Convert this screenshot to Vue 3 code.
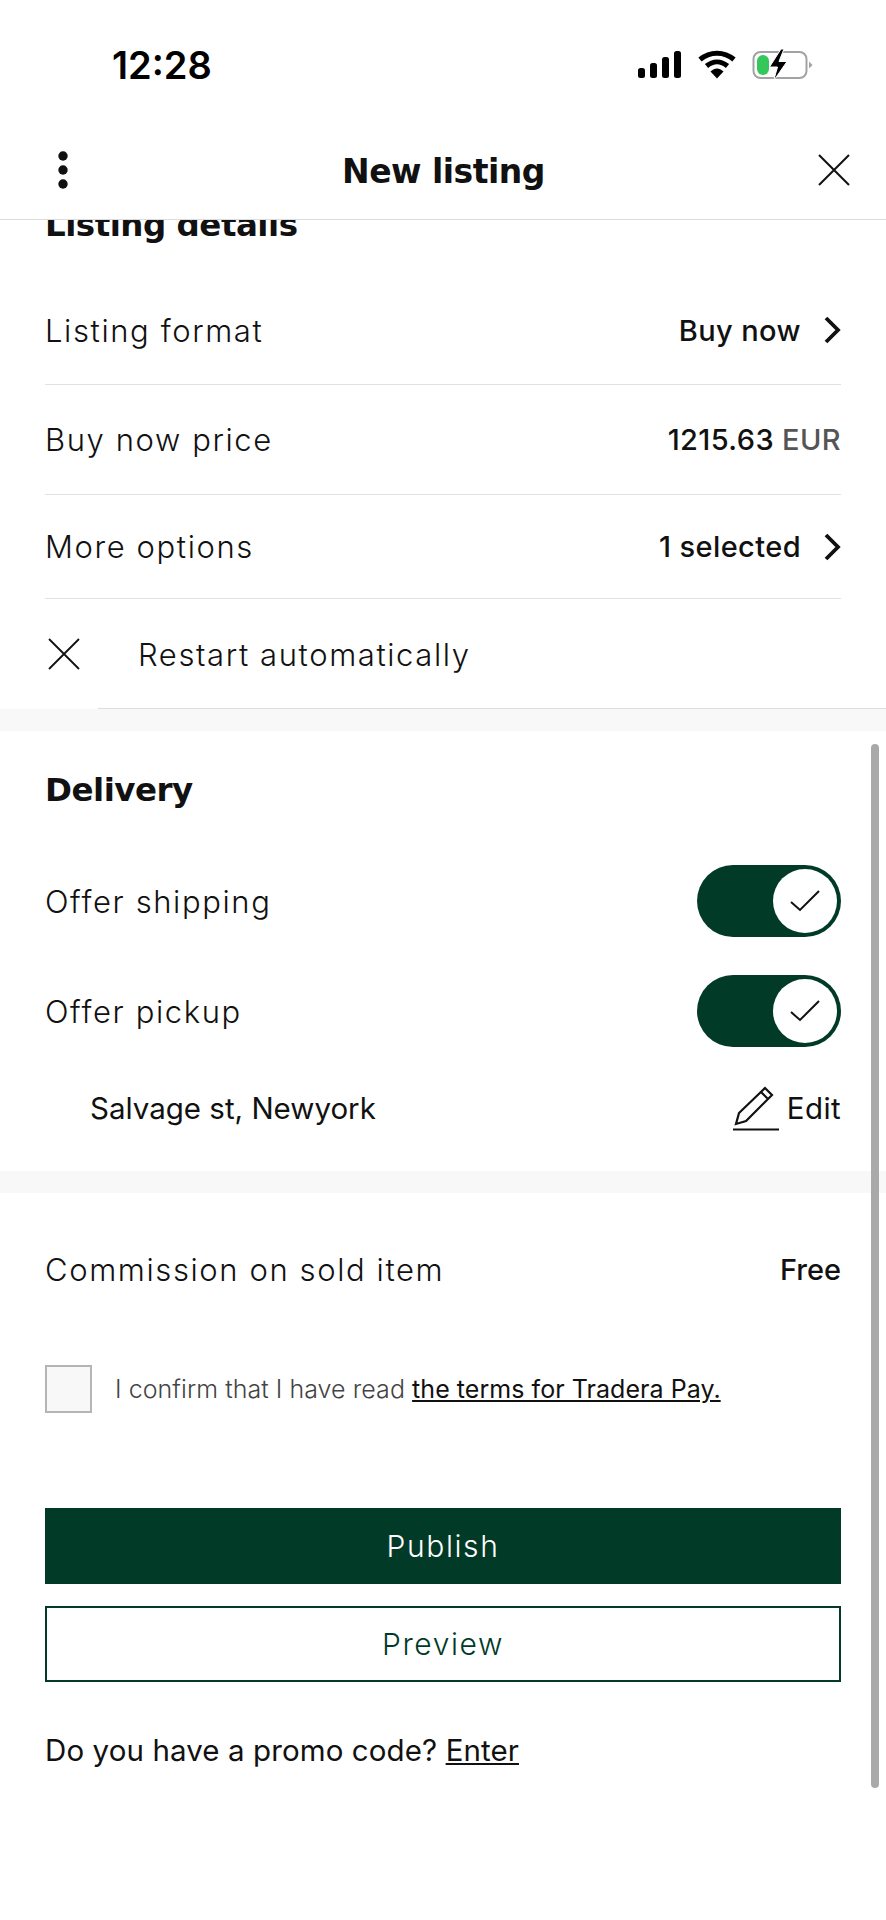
<template>
  <div class="screen">
    <div class="status">
      <span class="time">12:28</span>
      <div class="status-icons">
        <svg width="44" height="28" viewBox="0 0 44 28">
          <rect x="0" y="17" width="7" height="10" rx="2.5" fill="#000" />
          <rect x="12" y="12" width="7" height="15" rx="2.5" fill="#000" />
          <rect x="24" y="6" width="7" height="21" rx="2.5" fill="#000" />
          <rect x="36" y="0" width="7" height="27" rx="2.5" fill="#000" />
        </svg>
        <svg width="38" height="30" viewBox="0 0 38 30">
          <path d="M2 9.5C12 1 26 1 36 9.5" fill="none" stroke="#000" stroke-width="5" />
          <path d="M8.5 16C15 10.5 23 10.5 29.5 16" fill="none" stroke="#000" stroke-width="5" />
          <path d="M12.5 21.5C17 17.5 21 17.5 25.5 21.5L19 28.5Z" fill="#000" />
        </svg>
        <svg class="battery" width="62" height="34" viewBox="0 0 62 34">
          <rect x="1.5" y="4" width="53" height="26" rx="7" fill="none" stroke="#a3a3a3" stroke-width="2" />
          <path d="M57 13.5L60.5 17L57 20.5Z" fill="#a3a3a3" />
          <rect x="5" y="7" width="12" height="20" rx="6" fill="#34c759" />
          <path d="M29 1L17.5 19H25.5L21.5 33L35 13.5H27L32 1Z" fill="#000" stroke="#fff" stroke-width="1" />
        </svg>
      </div>
    </div>

    <header class="topbar">
      <svg class="dots" width="12" height="38" viewBox="0 0 12 38">
        <circle cx="6" cy="5" r="4.7" fill="#111" />
        <circle cx="6" cy="19" r="4.7" fill="#111" />
        <circle cx="6" cy="33" r="4.7" fill="#111" />
      </svg>
      <h1 class="title">New listing</h1>
      <svg class="close" width="32" height="32" viewBox="0 0 32 32">
        <path d="M1 1L31 31M31 1L1 31" stroke="#111" stroke-width="2" fill="none" />
      </svg>
    </header>

    <main class="content">
      <section class="details">
        <h2 class="section-title clipped">Listing details</h2>
        <div v-for="row in detailRows" :key="row.label" class="row" :class="row.cls">
          <span class="label">{{ row.label }}</span>
          <span class="value">
            {{ row.value }}<span v-if="row.unit" class="unit"> {{ row.unit }}</span>
            <svg v-if="row.arrow" class="chevron" width="19" height="30" viewBox="0 0 19 30">
              <path d="M3 3L15 15L3 27" stroke="#111" stroke-width="3.8" fill="none" />
            </svg>
          </span>
        </div>
        <div class="restart">
          <svg width="32" height="32" viewBox="0 0 32 32">
            <path d="M1 1L31 31M31 1L1 31" stroke="#111" stroke-width="1.8" fill="none" />
          </svg>
          <span class="label">Restart automatically</span>
        </div>
      </section>

      <section class="delivery">
        <h2 class="section-title">Delivery</h2>
        <div v-for="item in deliveryRows" :key="item" class="toggle-row">
          <span class="label">{{ item }}</span>
          <div class="toggle">
            <div class="knob">
              <svg width="30" height="24" viewBox="0 0 30 24">
                <path d="M1 13L10 21L29 2" stroke="#111" stroke-width="2" fill="none" />
              </svg>
            </div>
          </div>
        </div>
        <div class="address">
          <span>Salvage st, Newyork</span>
          <span class="edit">
            <svg width="48" height="46" viewBox="0 0 48 46">
              <path d="M33 3L40 10L14 36L4 39L7 28Z M29 7L36 14" stroke="#111" stroke-width="2.2" fill="none" />
              <path d="M1 44.5H47" stroke="#111" stroke-width="2.2" />
            </svg>
            Edit
          </span>
        </div>
      </section>

      <section class="summary">
        <div class="commission">
          <span class="label">Commission on sold item</span>
          <span class="free">Free</span>
        </div>
        <div class="confirm">
          <span class="checkbox"></span>
          <p>I confirm that I have read <a>the terms for Tradera Pay.</a></p>
        </div>
        <button class="btn primary">Publish</button>
        <button class="btn outline">Preview</button>
        <p class="promo">Do you have a promo code? <a>Enter</a></p>
      </section>
    </main>

    <div class="scrollbar"></div>
  </div>
</template>

<script setup>
const detailRows = [
  { label: 'Listing format', value: 'Buy now', arrow: true, cls: 'r1' },
  { label: 'Buy now price', value: '1215.63', unit: 'EUR', cls: 'r2' },
  { label: 'More options', value: '1 selected', arrow: true, cls: 'r3' },
]

const deliveryRows = ['Offer shipping', 'Offer pickup']
</script>

<style>
html,
body {
  margin: 0;
  background: #fff;
}
</style>

<style scoped>
.screen {
  position: relative;
  width: 886px;
  height: 1920px;
  overflow: hidden;
  background: #fff;
  color: #111;
  font-family: "Inter", "Liberation Sans", sans-serif;
  display: flex;
  flex-direction: column;
}

.status {
  height: 130px;
  flex: none;
  display: flex;
  justify-content: space-between;
  align-items: center;
  padding: 0 72px 0 112px;
  box-sizing: border-box;
}

.time {
  font-size: 38px;
  font-weight: 600;
  color: #000;
}

.status-icons {
  display: flex;
  align-items: center;
  gap: 16px;
}

.topbar {
  height: 90px;
  flex: none;
  box-sizing: border-box;
  border-bottom: 1px solid #dcdcdc;
  padding: 0 36px 10px 57px;
  display: flex;
  align-items: center;
  justify-content: space-between;
  background: #fff;
}

.title {
  margin: 4px 0 0;
  font-family: "DejaVu Sans", sans-serif;
  font-size: 33px;
  font-weight: 700;
  letter-spacing: -0.5px;
}

.content {
  flex: 1;
  overflow: hidden;
}

.section-title {
  margin: 0;
  font-family: "DejaVu Sans", sans-serif;
  font-size: 32.5px;
  font-weight: 700;
  letter-spacing: -0.5px;
  line-height: 42px;
}

.clipped {
  margin-top: -16px;
  padding-left: 45px;
}

.details {
  border-bottom: 22px solid #f8f8f8;
}

.row {
  margin: 0 45px;
  display: flex;
  justify-content: space-between;
  align-items: center;
  border-bottom: 1px solid #e2e2e2;
  box-sizing: border-box;
}

.r1 {
  height: 139px;
  padding-top: 30px;
}

.r2 {
  height: 110px;
}

.r3 {
  height: 104px;
}

.label {
  font-size: 31px;
  font-weight: 300;
  letter-spacing: 1.6px;
}

.value {
  display: flex;
  align-items: center;
  gap: 8px;
  font-size: 29px;
  font-weight: 500;
  letter-spacing: 0.4px;
  white-space: pre;
}

.unit {
  color: #555;
}

.chevron {
  margin-left: 14px;
  margin-right: -1px;
}

.restart {
  height: 110px;
  padding-left: 48px;
  display: flex;
  align-items: center;
  gap: 58px;
  box-sizing: border-box;
  position: relative;
}

.restart::after {
  content: "";
  position: absolute;
  left: 98px;
  right: 0;
  bottom: 0;
  border-bottom: 1px solid #dedede;
}

.delivery {
  padding: 38px 45px 0;
  border-bottom: 22px solid #f8f8f8;
  height: 462px;
  box-sizing: border-box;
}

.toggle-row {
  height: 110px;
  display: flex;
  justify-content: space-between;
  align-items: center;
}

.delivery .section-title {
  margin-bottom: 35px;
}

.toggle {
  width: 144px;
  height: 72px;
  border-radius: 36px;
  background: #023a28;
  display: flex;
  align-items: center;
  justify-content: flex-end;
  padding-right: 4px;
  box-sizing: border-box;
}

.knob {
  width: 64px;
  height: 64px;
  border-radius: 50%;
  background: #fff;
  display: flex;
  align-items: center;
  justify-content: center;
}

.address {
  margin-top: 19px;
  padding-left: 45px;
  display: flex;
  justify-content: space-between;
  align-items: center;
  font-size: 29.5px;
}

.edit {
  display: flex;
  align-items: center;
  gap: 7px;
  font-weight: 400;
  letter-spacing: 0.4px;
}

.summary {
  padding: 0 45px;
}

.commission {
  height: 152px;
  display: flex;
  justify-content: space-between;
  align-items: center;
}

.free {
  font-size: 29px;
  font-weight: 500;
}

.confirm {
  margin-top: 20px;
  display: flex;
  align-items: center;
  gap: 23px;
}

.checkbox {
  width: 47px;
  height: 48px;
  box-sizing: border-box;
  border: 2px solid #b5b5b5;
  background: #f8f8f8;
  flex: none;
}

.confirm p {
  margin: 0;
  font-size: 25px;
  font-weight: 300;
  letter-spacing: 0.05px;
  color: #444;
}

.confirm a,
.promo a {
  color: #111;
  text-decoration: underline;
  font-weight: 400;
}

.btn {
  display: block;
  width: 100%;
  box-sizing: border-box;
  font-family: inherit;
  font-size: 30px;
  font-weight: 300;
  letter-spacing: 1.6px;
  border-radius: 0;
  padding: 0;
}

.primary {
  margin-top: 95px;
  height: 76px;
  background: #023a28;
  color: #fff;
  border: none;
}

.outline {
  margin-top: 22px;
  height: 76px;
  background: #fff;
  color: #023a28;
  border: 2px solid #023a28;
}

.promo {
  margin: 50px 0 0;
  font-size: 29.5px;
  font-weight: 400;
  letter-spacing: 0.1px;
}

.scrollbar {
  position: absolute;
  left: 871px;
  top: 744px;
  width: 8px;
  height: 1044px;
  border-radius: 4px;
  background: #a9a9a9;
}
</style>
